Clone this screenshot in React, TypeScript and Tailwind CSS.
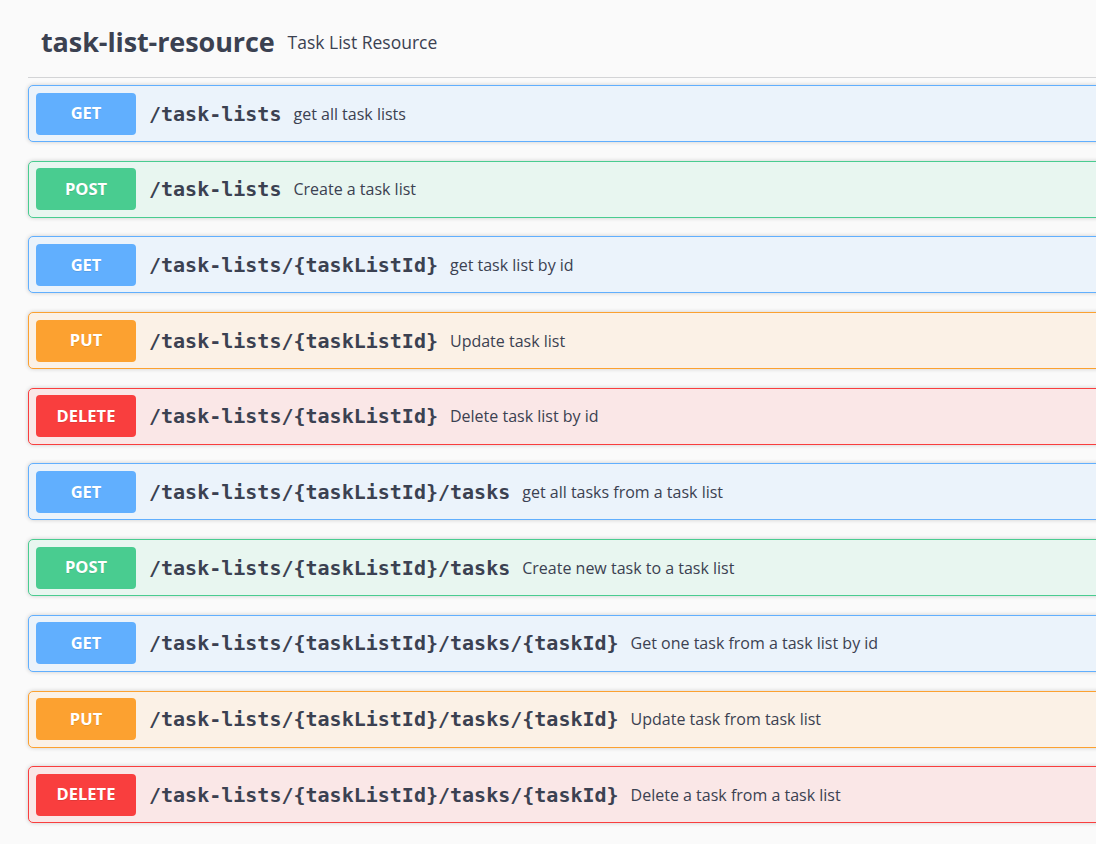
import React from 'react';

type Method = 'GET' | 'POST' | 'PUT' | 'DELETE';

interface Operation {
    method: Method;
    path: string;
    summary: string;
}

const operations: Operation[] = [
    { method: 'GET', path: '/task-lists', summary: 'get all task lists' },
    { method: 'POST', path: '/task-lists', summary: 'Create a task list' },
    { method: 'GET', path: '/task-lists/{taskListId}', summary: 'get task list by id' },
    { method: 'PUT', path: '/task-lists/{taskListId}', summary: 'Update task list' },
    { method: 'DELETE', path: '/task-lists/{taskListId}', summary: 'Delete task list by id' },
    { method: 'GET', path: '/task-lists/{taskListId}/tasks', summary: 'get all tasks from a task list' },
    { method: 'POST', path: '/task-lists/{taskListId}/tasks', summary: 'Create new task to a task list' },
    { method: 'GET', path: '/task-lists/{taskListId}/tasks/{taskId}', summary: 'Get one task from a task list by id' },
    { method: 'PUT', path: '/task-lists/{taskListId}/tasks/{taskId}', summary: 'Update task from task list' },
    { method: 'DELETE', path: '/task-lists/{taskListId}/tasks/{taskId}', summary: 'Delete a task from a task list' },
];

// colour sets per http method, written out so tailwind picks them up
const styles: Record<Method, { card: string; badge: string }> = {
    GET: { card: 'bg-[#ebf3fb] border-[#61affe]', badge: 'bg-[#61affe]' },
    POST: { card: 'bg-[#e8f6f0] border-[#49cc90]', badge: 'bg-[#49cc90]' },
    PUT: { card: 'bg-[#fbf1e6] border-[#fca130]', badge: 'bg-[#fca130]' },
    DELETE: { card: 'bg-[#fae7e7] border-[#f93e3e]', badge: 'bg-[#f93e3e]' },
};

const OperationRow: React.FC<{ op: Operation }> = ({ op }) => {
    const s = styles[op.method];
    return (
        <div className={`h-[57px] mb-[18.7px] border rounded-[5px] shadow-[0_0_4px_rgba(0,0,0,0.19)] flex items-center px-[7px] ${s.card}`}>
            <span className={`w-[100px] h-[42px] rounded-[4px] flex items-center justify-center text-white font-bold text-[16.5px] font-['Open_Sans',sans-serif] [text-shadow:0_1px_0_rgba(0,0,0,0.1)] ${s.badge}`}>
                {op.method}
            </span>
            <span className="pl-[13px] pr-[12px] text-[20px] font-bold text-[#3b4151] font-['DejaVu_Sans_Mono',monospace]">
                {op.path}
            </span>
            <span className="text-[16px] text-[#3b4151] font-['Open_Sans',sans-serif]">
                {op.summary}
            </span>
        </div>
    );
};

export default function App() {
    return (
        <div className="min-h-[844px] bg-[#fafafa] overflow-hidden">
            <div className="w-[1200px] pl-[28px]">
                {/* Tag header */}
                <div className="h-[78px] pt-[8px] flex items-center pl-[13px] border-b border-[#d3d4d6] mb-[7px] font-['Open_Sans',sans-serif] text-[#3b4151]">
                    <h4 className="text-[27px] font-bold tracking-[-0.1px]">
                        task-list-resource
                    </h4>
                    <span className="ml-[13px] text-[17.5px]">
                        Task List Resource
                    </span>
                </div>

                {operations.map((op, idx) => (
                    <OperationRow key={idx} op={op} />
                ))}
            </div>
        </div>
    );
}
